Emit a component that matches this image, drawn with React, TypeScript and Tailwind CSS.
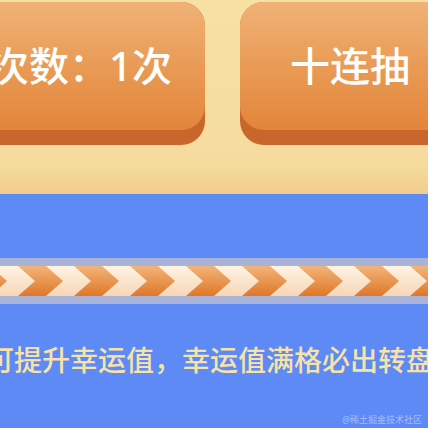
import React from "react";

const FONT = '"Noto Sans", "Noto Sans CJK SC", sans-serif';

function ChevronStrip() {
  const period = 56;
  const band = 28;
  const depth = 17;
  const h = 30;
  const items = [];
  for (let i = -1; i < 9; i++) {
    const x = 18 + i * period - period;
    items.push(
      <polygon
        key={`o${i}`}
        points={`${x},0 ${x + band},0 ${x + band + depth},${h / 2} ${x + band},${h} ${x},${h} ${x + depth},${h / 2}`}
        fill="url(#orangeBand)"
      />
    );
  }
  return (
    <svg width="428" height={h} viewBox={`0 0 428 ${h}`} className="block">
      <defs>
        <linearGradient id="creamBand" x1="0" y1="0" x2="0" y2="1">
          <stop offset="0" stopColor="#fff3e2" />
          <stop offset="1" stopColor="#f6d6b8" />
        </linearGradient>
        <linearGradient id="orangeBand" x1="0" y1="0" x2="0" y2="1">
          <stop offset="0" stopColor="#f2b57a" />
          <stop offset="1" stopColor="#e07628" />
        </linearGradient>
      </defs>
      <rect x="0" y="0" width="428" height={h} fill="url(#creamBand)" />
      {items}
    </svg>
  );
}

function RaisedButton({ label, className, faceClass }: { label: string; className: string; faceClass: string }) {
  return (
    <div className={`shrink-0 rounded-[24px] bg-[#c9662b] pb-[15px] ${className}`}>
      <div
        className={`flex h-[128px] items-center rounded-[24px] bg-gradient-to-b from-[#f0b277] via-[#e99b55] to-[#e3853b] text-[40px] font-medium leading-none text-white ${faceClass}`}
        style={{ fontFamily: FONT }}
      >
        {label}
      </div>
    </div>
  );
}

export default function App() {
  return (
    <div className="relative h-[428px] w-[428px] overflow-hidden" style={{ fontFamily: FONT }}>
      <div className="flex h-[194px] items-start gap-[35px] bg-gradient-to-b from-[#f6e0a2] via-[#f5dc9e] via-85% to-[#f2cc8a] pt-[2px]">
        <RaisedButton label="抽奖次数：1次" className="ml-[-95px] w-[300px]" faceClass="justify-end pr-[33px]" />
        <RaisedButton label="十连抽" className="w-[220px]" faceClass="justify-center" />
      </div>
      <div className="h-[234px] bg-[#5d8af4] pt-[64px]">
        <div className="bg-[#a8b3d7] py-[8px]">
          <ChevronStrip />
        </div>
        <div className="mt-[42px] ml-[-14px] whitespace-nowrap text-[28px] font-medium leading-[28px] text-[#f8e2a6]">
          可提升幸运值，幸运值满格必出转盘
        </div>
      </div>
      <div className="absolute bottom-[4px] right-[6px] text-[9px] leading-none text-white/45">
        @稀土掘金技术社区
      </div>
    </div>
  );
}
